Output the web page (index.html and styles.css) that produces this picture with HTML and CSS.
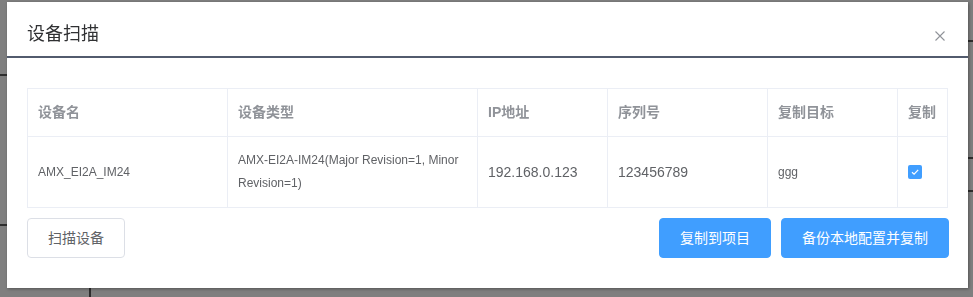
FILE: index.html
```html
<!DOCTYPE html>
<html lang="zh-CN">
  <head>
    <meta charset="UTF-8" />
    <meta name="viewport" content="width=device-width, initial-scale=1.0" />
    <title>设备扫描</title>
    <link rel="stylesheet" href="styles.css">
  </head>
  <body>
    <div class="backdrop">
      <span class="line h" style="top: 74px; left: 0; width: 8px"></span>
      <span class="line h" style="top: 224px; left: 0; width: 8px"></span>
      <span class="line h" style="top: 40px; left: 966px; width: 7px"></span>
      <span class="line h" style="top: 157px; left: 966px; width: 7px"></span>
      <span class="line h" style="top: 190px; left: 966px; width: 7px"></span>
      <span class="line v" style="top: 280px; left: 89px; height: 17px"></span>
    </div>

    <div class="dialog">
      <div class="dialog-header">
        <span class="dialog-title">设备扫描</span>
        <button class="dialog-close" aria-label="close">
          <svg width="12" height="12" viewBox="0 0 12 12">
            <path d="M1.5 1.5 L10.5 10.5 M10.5 1.5 L1.5 10.5" stroke="#909399" stroke-width="1.1" fill="none" />
          </svg>
        </button>
      </div>

      <div class="dialog-body">
        <table class="device-table">
          <colgroup>
            <col style="width: 200px" />
            <col style="width: 250px" />
            <col style="width: 130px" />
            <col style="width: 160px" />
            <col style="width: 130px" />
            <col />
          </colgroup>
          <thead>
            <tr>
              <th>设备名</th>
              <th>设备类型</th>
              <th>IP地址</th>
              <th>序列号</th>
              <th>复制目标</th>
              <th>复制</th>
            </tr>
          </thead>
          <tbody>
            <tr>
              <td class="small">AMX_EI2A_IM24</td>
              <td class="small">AMX-EI2A-IM24(Major Revision=1, Minor Revision=1)</td>
              <td>192.168.0.123</td>
              <td>123456789</td>
              <td class="small">ggg</td>
              <td>
                <span class="checkbox">
                  <svg width="14" height="14" viewBox="0 0 14 14">
                    <path d="M4 7.2 L6.1 9.2 L10.2 4.8" stroke="#fff" stroke-width="1.2" fill="none" />
                  </svg>
                </span>
              </td>
            </tr>
          </tbody>
        </table>
      </div>

      <div class="dialog-footer">
        <button class="btn">扫描设备</button>
        <div class="footer-right">
          <button class="btn primary">复制到项目</button>
          <button class="btn primary">备份本地配置并复制</button>
        </div>
      </div>
    </div>
  </body>
</html>
```

FILE: styles.css
```css
* {
  padding: 0;
  margin: 0;
  box-sizing: border-box;
}
html {
  font-family: "Liberation Sans", "Noto Sans CJK SC", sans-serif;
}
body {
  background-color: #7f7f7f;
  overflow: hidden;
  height: 297px;
}
.backdrop {
  position: fixed;
  inset: 0;
}
.line {
  position: absolute;
  background-color: #2e2e2e;
}
.line.h {
  height: 2px;
}
.line.v {
  width: 2px;
}
.dialog {
  position: relative;
  margin: 2px 0 0 7px;
  width: 961px;
  height: 286px;
  background-color: #fff;
  box-shadow: 1px 1px 3px rgba(0, 0, 0, 0.35);
  display: flex;
  flex-direction: column;
}
.dialog-header {
  display: flex;
  justify-content: space-between;
  align-items: center;
  padding: 20px 20px 10px;
  border-bottom: 2px solid #525b6d;
}
.dialog-title {
  font-size: 18px;
  line-height: 24px;
  color: #303133;
}
.dialog-close {
  border: none;
  background: none;
  width: 12px;
  height: 12px;
  margin-right: 2px;
  margin-top: 4px;
  display: flex;
}
.dialog-body {
  padding: 30px 20px 0;
}
.device-table {
  width: 921px;
  border-collapse: collapse;
  table-layout: fixed;
  border: 1px solid #ebeef5;
  font-size: 14px;
  color: #606266;
}
.device-table th,
.device-table td {
  border: 1px solid #ebeef5;
  padding: 12px 10px;
  line-height: 23px;
  text-align: left;
  vertical-align: middle;
}
.device-table th {
  font-weight: bold;
  color: #909399;
}
.device-table td.small {
  font-size: 12px;
}
.checkbox {
  display: inline-flex;
  width: 14px;
  height: 14px;
  border-radius: 2px;
  background-color: #409eff;
  vertical-align: middle;
  margin-top: -2px;
}
.dialog-footer {
  display: flex;
  justify-content: space-between;
  padding: 10px 19px 30px 20px;
}
.footer-right {
  display: flex;
  gap: 10px;
}
.btn {
  font-family: "Liberation Sans", "Noto Sans CJK SC", sans-serif;
  font-size: 14px;
  line-height: 14px;
  height: 40px;
  padding: 12px 20px;
  border: 1px solid #dcdfe6;
  border-radius: 4px;
  background-color: #fff;
  color: #606266;
}
.btn.primary {
  background-color: #409eff;
  border-color: #409eff;
  color: #fff;
}
```
